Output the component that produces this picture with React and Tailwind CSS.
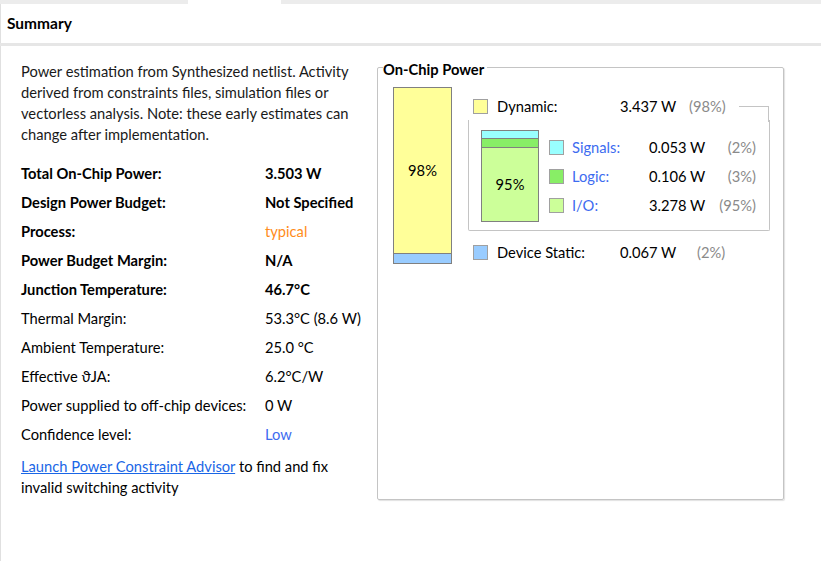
import React from 'react'

const rows = [
  { label: 'Total On-Chip Power:', value: '3.503 W', bold: true },
  { label: 'Design Power Budget:', value: 'Not Specified', bold: true },
  { label: 'Process:', value: 'typical', bold: true, valueClass: 'text-[#ff8c1a] font-normal' },
  { label: 'Power Budget Margin:', value: 'N/A', bold: true },
  { label: 'Junction Temperature:', value: '46.7°C', bold: true },
  { label: 'Thermal Margin:', value: '53.3°C (8.6 W)' },
  { label: 'Ambient Temperature:', value: '25.0 °C' },
  { label: 'Effective ϑJA:', value: '6.2°C/W' },
  { label: 'Power supplied to off-chip devices:', value: '0 W' },
  { label: 'Confidence level:', value: 'Low', valueClass: 'text-[#3d6cf0]' },
]

const subRows = [
  { name: 'Signals:', color: 'bg-[#99ffff]', watts: '0.053 W', pct: '(2%)' },
  { name: 'Logic:', color: 'bg-[#88ee66]', watts: '0.106 W', pct: '(3%)' },
  { name: 'I/O:', color: 'bg-[#ccff99]', watts: '3.278 W', pct: '(95%)' },
]

function Swatch({ color }) {
  return <span className={`block w-[15px] h-[15px] border border-[#a0a0a0] ${color}`} />
}

export default function App() {
  return (
    <div
      className="w-[821px] h-[561px] bg-white text-[14.7px] text-black overflow-hidden"
      style={{ fontFamily: '"Segoe UI", Lato, "Noto Sans", sans-serif' }}
    >
      {/* tab strip */}
      <div className="flex h-[4px]">
        <div className="w-[188px] bg-[#ececec]" />
        <div className="w-[93px] bg-white" />
        <div className="flex-1 bg-[#ececec]" />
      </div>

      {/* header */}
      <div className="h-[39px] border-l border-[#e0e0e0] flex items-center px-[6px]">
        <span className="font-bold text-[15.5px]">Summary</span>
      </div>
      <div className="h-[3px] bg-[#e6e6e6]" />

      <div className="flex border-l border-[#e0e0e0] h-[515px]">
        {/* left column */}
        <div className="w-[376px] pl-[20px] pt-[15px]">
          <p className="leading-[21px] text-[#1a1a1a]">
            Power estimation from Synthesized netlist. Activity<br />
            derived from constraints files, simulation files or<br />
            vectorless analysis. Note: these early estimates can<br />
            change after implementation.
          </p>

          <div className="mt-[14px]">
            {rows.map((r) => (
              <div key={r.label} className="flex h-[29px] items-center">
                <span className={`w-[244px] shrink-0 ${r.bold ? 'font-bold' : ''}`}>{r.label}</span>
                <span className={r.valueClass ? r.valueClass : r.bold ? 'font-bold' : ''}>{r.value}</span>
              </div>
            ))}
          </div>

          <p className="leading-[21px] mt-[7px]">
            <a href="#" className="text-[#1a66e6] underline">Launch Power Constraint Advisor</a> to find and fix<br />
            invalid switching activity
          </p>
        </div>

        {/* on-chip power box */}
        <div className="mt-[21px] w-[407px] h-[433px] relative border border-[#c4c4c4] rounded-[2px] shadow-[1px_1px_1px_rgba(0,0,0,0.12)]">
          <span className="absolute left-[5px] top-[-8px] bg-white pr-[3px] font-bold leading-[18px]">On-Chip Power</span>

          <div className="flex pl-[15px] pt-[19px]">
            {/* total bar */}
            <div className="w-[59px] h-[177px] border border-[#808080] flex flex-col">
              <div className="flex-1 bg-[#ffff99] flex items-center justify-center">98%</div>
              <div className="h-[10px] bg-[#99ccff] border-t border-[#808080]" />
            </div>

            <div className="ml-[16px] pt-[11px] w-[302px] relative">
              <div className="flex items-center h-[16px]">
                <span className="ml-[5px]"><Swatch color="bg-[#ffff99]" /></span>
                <span className="ml-[9px] w-[123px]">Dynamic:</span>
                <span className="w-[69px]">3.437 W</span>
                <span className="text-[#8a8a8a]">(98%)</span>
              </div>
              <span className="absolute left-[271px] top-[19px] w-[30px] h-[16px] border-t border-r border-[#c4c4c4]" />

              <div className="mt-[6px] h-[111px] border-l border-r border-b border-[#c4c4c4] rounded-b-[2px] flex pl-[12px] pt-[10px]">
                <div className="w-[58px] h-[92px] border border-[#808080] flex flex-col">
                  <div className="h-[8px] bg-[#99ffff] border-b border-[#808080]" />
                  <div className="h-[9px] bg-[#88ee66] border-b border-[#808080]" />
                  <div className="flex-1 bg-[#ccff99] flex items-center justify-center">95%</div>
                </div>
                <div className="ml-[10px] pt-[3px]">
                  {subRows.map((s) => (
                    <div key={s.name} className="flex items-center h-[29px]">
                      <Swatch color={s.color} />
                      <span className="ml-[8px] w-[77px] text-[#3d6cf0]">{s.name}</span>
                      <span className="w-[64px]">{s.watts}</span>
                      <span className="w-[43px] text-right text-[#8a8a8a]">{s.pct}</span>
                    </div>
                  ))}
                </div>
              </div>

              <div className="flex items-center h-[16px] mt-[13px]">
                <span className="ml-[5px]"><Swatch color="bg-[#99ccff]" /></span>
                <span className="ml-[9px] w-[123px]">Device Static:</span>
                <span className="w-[77px]">0.067 W</span>
                <span className="text-[#8a8a8a]">(2%)</span>
              </div>
            </div>
          </div>
        </div>
      </div>
    </div>
  )
}
